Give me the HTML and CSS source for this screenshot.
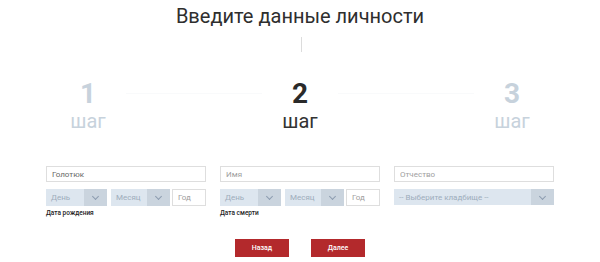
FILE: index.html
```html
<!DOCTYPE html>
<html lang="ru">
<head>
    <meta charset="UTF-8">
    <meta name="viewport" content="width=device-width, initial-scale=1.0">
    <title>Введите данные личности</title>
    <link rel="stylesheet" href="styles.css">
</head>
<body>
    <div class="page">
        <h1>Введите данные личности</h1>
        <div class="divider"></div>

        <div class="steps">
            <div class="step">
                <span class="num">1</span>
                <span class="word">шаг</span>
            </div>
            <div class="step-line"></div>
            <div class="step active">
                <span class="num">2</span>
                <span class="word">шаг</span>
            </div>
            <div class="step-line"></div>
            <div class="step">
                <span class="num">3</span>
                <span class="word">шаг</span>
            </div>
        </div>

        <form class="person-form">
            <div class="col">
                <input type="text" class="field" value="Голотюк">
                <div class="date-row">
                    <div class="select day"><span>День</span><i class="arrow"></i></div>
                    <div class="select month"><span>Месяц</span><i class="arrow"></i></div>
                    <input type="text" class="field year" placeholder="Год">
                </div>
                <label class="hint">Дата рождения</label>
            </div>
            <div class="col">
                <input type="text" class="field" placeholder="Имя">
                <div class="date-row">
                    <div class="select day"><span>День</span><i class="arrow"></i></div>
                    <div class="select month"><span>Месяц</span><i class="arrow"></i></div>
                    <input type="text" class="field year" placeholder="Год">
                </div>
                <label class="hint">Дата смерти</label>
            </div>
            <div class="col">
                <input type="text" class="field" placeholder="Отчество">
                <div class="select wide"><span>-- Выберите кладбище --</span><i class="arrow"></i></div>
            </div>
        </form>

        <div class="buttons">
            <button type="button">Назад</button>
            <button type="button">Далее</button>
        </div>
    </div>
</body>
</html>
```

FILE: styles.css
```css
body {
    margin: 0;
    font-family: Roboto, 'Liberation Sans', sans-serif;
    background: #fff;
    color: #333;
}

.page {
    width: 600px;
    height: 262px;
    overflow: hidden;
}

h1 {
    margin: 0;
    padding-top: 4px;
    font-size: 20px;
    font-weight: 400;
    line-height: 25px;
    text-align: center;
    color: #2e2e2e;
}

.divider {
    width: 1px;
    height: 15px;
    margin: 8px auto 0 301px;
    background: #dcdcdc;
}

.steps {
    display: flex;
    align-items: flex-start;
    width: 500px;
    margin: 27px auto 0;
}

.step {
    width: 76px;
    display: flex;
    flex-direction: column;
    align-items: center;
    color: #c7d2dc;
}

.step-line {
    flex: 1;
    height: 1px;
    margin-top: 14px;
    background: #f9fafb;
}

.step .num {
    font-size: 28px;
    font-weight: 700;
    line-height: 30px;
}

.step .word {
    font-size: 20px;
    line-height: 24px;
}

.step.active {
    color: #2a2a2a;
}

.step.active .word {
    color: #333;
}

.person-form {
    display: flex;
    gap: 14px;
    width: 508px;
    margin: 33px auto 0;
}

.col {
    width: 160px;
}

.field {
    box-sizing: border-box;
    display: block;
    width: 100%;
    height: 16px;
    padding: 0 5px;
    border: 1px solid #dedede;
    font-family: Roboto, 'Liberation Sans', sans-serif;
    font-size: 8px;
    color: #666;
    background: #fff;
    outline: none;
}

.field::placeholder {
    color: #a0a0a0;
}

.date-row {
    display: flex;
    margin-top: 7px;
}

.select {
    box-sizing: border-box;
    display: flex;
    align-items: center;
    height: 17px;
    background: #dde6ef;
    font-size: 8px;
    color: #9eadbc;
}

.select span {
    flex: 1;
    padding-left: 5px;
    white-space: nowrap;
}

.select .arrow {
    width: 23px;
    height: 100%;
    background: #cad4de;
    position: relative;
}

.select .arrow::after {
    content: "";
    position: absolute;
    left: 9px;
    top: 5px;
    width: 4px;
    height: 4px;
    border-right: 1px solid #8d9db0;
    border-bottom: 1px solid #8d9db0;
    transform: rotate(45deg);
}

.select.day {
    width: 61px;
    margin-right: 4px;
}

.select.month {
    width: 59px;
    margin-right: 2px;
}

.field.year {
    width: 34px;
    height: 17px;
}

.select.wide {
    width: 160px;
    height: 16px;
    margin-top: 7px;
}

.hint {
    display: block;
    margin-top: 3px;
    font-size: 6.5px;
    font-weight: 500;
    color: #222;
}

.buttons {
    display: flex;
    justify-content: center;
    gap: 22px;
    margin-top: 22px;
}

button {
    width: 54px;
    height: 18px;
    padding: 0;
    border: none;
    background: #b3292c;
    color: #fff;
    font-family: Roboto, 'Liberation Sans', sans-serif;
    font-size: 7px;
    font-weight: 500;
    cursor: pointer;
}
```
